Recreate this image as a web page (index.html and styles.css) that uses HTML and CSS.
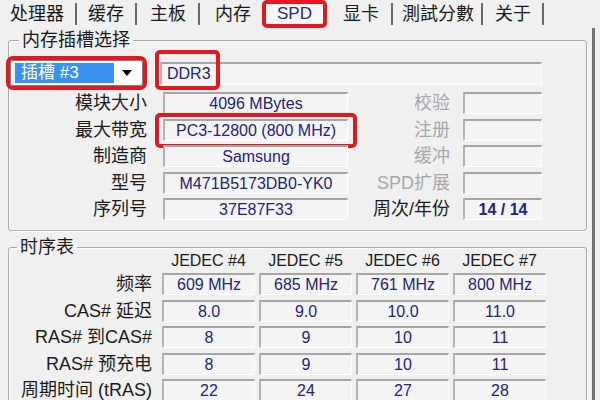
FILE: index.html
```html
<!DOCTYPE html>
<html lang="zh">
<head>
<meta charset="utf-8">
<title>CPU-Z SPD</title>
<link rel="stylesheet" href="styles.css">
</head>
<body>
<div class="window">
  <nav class="tabs">
    <span class="tab t1">处理器</span>
    <span class="tab t2">缓存</span>
    <span class="tab t3">主板</span>
    <span class="tab t4">内存</span>
    <span class="tab active">SPD</span>
    <span class="tab t6">显卡</span>
    <span class="tab t7">測試分數</span>
    <span class="tab t8">关于</span>
  </nav>
  <div class="page">
    <fieldset class="group slot">
      <legend class="legend-slot">内存插槽选择</legend>
      <div class="slot-grid">
        <div class="combo">
          <span class="combo-sel">插槽 #3</span>
          <span class="combo-btn"><svg width="10" height="6" viewBox="0 0 10 6"><path d="M0 0H10L5 6Z" fill="#000"/></svg></span>
        </div>
        <div class="field field-type">DDR3<span class="mark mark-ddr"></span></div>

        <div class="label">模块大小</div>
        <div class="field">4096 MBytes</div>
        <div class="label label-r dim">校验</div>
        <div class="field"></div>

        <div class="label">最大带宽</div>
        <div class="field field-mark">PC3-12800 (800 MHz)<span class="mark mark-bw"></span></div>
        <div class="label label-r dim">注册</div>
        <div class="field"></div>

        <div class="label">制造商</div>
        <div class="field">Samsung</div>
        <div class="label label-r dim">缓冲</div>
        <div class="field"></div>

        <div class="label">型号</div>
        <div class="field">M471B5173DB0-YK0</div>
        <div class="label label-r dim">SPD扩展</div>
        <div class="field"></div>

        <div class="label">序列号</div>
        <div class="field">37E87F33</div>
        <div class="label label-r">周次/年份</div>
        <div class="field strong">14 / 14</div>
      </div>
    </fieldset>

    <fieldset class="group timing">
      <legend class="legend-timing">时序表</legend>
      <div class="timing-grid">
        <div></div>
        <div class="head">JEDEC #4</div>
        <div class="head">JEDEC #5</div>
        <div class="head">JEDEC #6</div>
        <div class="head">JEDEC #7</div>

        <div class="tlabel">频率</div>
        <div class="field">609 MHz</div>
        <div class="field">685 MHz</div>
        <div class="field">761 MHz</div>
        <div class="field">800 MHz</div>

        <div class="tlabel">CAS# 延迟</div>
        <div class="field">8.0</div>
        <div class="field">9.0</div>
        <div class="field">10.0</div>
        <div class="field">11.0</div>

        <div class="tlabel">RAS# 到CAS#</div>
        <div class="field">8</div>
        <div class="field">9</div>
        <div class="field">10</div>
        <div class="field">11</div>

        <div class="tlabel">RAS# 预充电</div>
        <div class="field">8</div>
        <div class="field">9</div>
        <div class="field">10</div>
        <div class="field">11</div>

        <div class="tlabel">周期时间 (tRAS)</div>
        <div class="field">22</div>
        <div class="field">24</div>
        <div class="field">27</div>
        <div class="field">28</div>
      </div>
    </fieldset>
  </div>
</div>
</body>
</html>
```

FILE: styles.css
```css
html, body {
  margin: 0;
  height: 100%;
  overflow: hidden;
}

body {
  background: #f0f0f0;
  font-family: "Liberation Sans", "Noto Sans CJK SC", sans-serif;
  color: #1a1a1a;
}

.window {
  height: 100%;
  display: flex;
  flex-direction: column;
}

/* ---------- tabs ---------- */
.tabs {
  display: flex;
  height: 28px;
  flex: none;
}

.tab {
  box-sizing: border-box;
  margin: 3px 0;
  height: 22px;
  line-height: 22px;
  font-size: 18px;
  padding: 0 11px;
  border-right: 2px solid #6b6b6b;
  white-space: nowrap;
}

.t1 { padding: 0 11px 0 10px; }
.t2 { padding: 0 11px 0 11px; }
.t3 { padding: 0 12px 0 13px; }
.t4 { padding: 0 11px 0 15px; border-right: none; }
.t6 { padding: 0 12px 0 16px; }
.t7 { padding: 0 7px 0 9px; }
.t8 { padding: 0 11px 0 12px; }

.tab.active {
  margin: 0;
  height: 28px;
  width: 65px;
  padding: 0;
  border: 4px solid #e01a22;
  border-radius: 5px;
  background: #f6f6f6;
  text-align: center;
  font-size: 17px;
  line-height: 20px;
  color: #2a2a80;
}

/* ---------- page ---------- */
.page {
  flex: 1;
  box-sizing: border-box;
  width: 595px;
  padding: 3px 5px 0 8px;
  border-right: 3px solid #737373;
}

.group {
  margin: 0;
  min-width: 0;
  border: 1px solid #ababab;
  border-radius: 3px;
  box-shadow: inset 1px 1px 0 #fbfbfb, 1px 1px 0 #fbfbfb;
}

.group legend {
  font-size: 18px;
  line-height: 18px;
  padding: 0 3px;
  color: #1a1a1a;
}

.legend-slot { margin-left: 10px; }
.legend-timing { margin-left: 8px; }

.slot {
  padding: 11px 0 10px 0;
}

.timing {
  margin-top: 7px;
  padding: 0 0 20px 0;
}

/* ---------- fields ---------- */
.field {
  position: relative;
  box-sizing: border-box;
  height: 22px;
  border-style: solid;
  border-width: 2px 1px 1px 2px;
  border-color: #a6a6a6 #fdfdfd #fdfdfd #b4b4b4;
  background: #f4f4f4;
  color: #24247a;
  font-size: 16px;
  line-height: 19px;
  text-align: center;
  white-space: nowrap;
}

.field.strong { font-weight: bold; }

.mark {
  position: absolute;
  box-sizing: border-box;
  border: 4px solid #e01a22;
  border-radius: 5px;
}

.mark-ddr {
  left: -7px;
  top: -14px;
  width: 65px;
  height: 40px;
}

.mark-bw {
  left: -10px;
  top: -8px;
  width: 202px;
  height: 35px;
}

/* ---------- slot grid ---------- */
.slot-grid {
  display: grid;
  grid-template-columns: 154px 185px 115px 79px;
  grid-template-rows: 27.5px repeat(5, 22px);
  row-gap: 4.5px;
}

.combo {
  grid-column: 1;
  align-self: start;
  margin-left: 1px;
  width: 133px;
  height: 26px;
  box-sizing: border-box;
  border: 1px solid #7f7f7f;
  background: #fff;
  padding: 2px;
  display: flex;
  outline: 4px solid #e01a22;
  border-radius: 3px;
}

.combo-sel {
  flex: 1;
  background: #3a92f0;
  color: #fff;
  font-size: 17px;
  line-height: 20px;
  padding-left: 6px;
  border-left: 2px solid #e9f2ff;
  white-space: nowrap;
}

.combo-btn {
  width: 26px;
  display: flex;
  align-items: center;
  justify-content: center;
}

.field-type {
  grid-column: 2 / 5;
  align-self: start;
  margin-top: 2px;
  margin-left: -3px;
  height: 23px;
  text-align: left;
  padding-left: 5px;
  line-height: 20px;
}

.label {
  font-size: 18px;
  line-height: 22px;
  text-align: right;
  padding-right: 16px;
  white-space: nowrap;
}

.label-r { padding-right: 13px; }

.dim { color: #a8a8a8; }

/* ---------- timing grid ---------- */
.timing-grid {
  margin-top: -3.5px;
  display: grid;
  grid-template-columns: 149px repeat(4, 93px);
  column-gap: 4px;
  grid-template-rows: 16px repeat(5, 22px);
  row-gap: 4.5px;
}

.head {
  font-size: 16px;
  line-height: 16px;
  text-align: center;
  color: #1a1a1a;
  white-space: nowrap;
}

.tlabel {
  font-size: 18px;
  line-height: 22px;
  text-align: right;
  padding-right: 6px;
  white-space: nowrap;
}
```
